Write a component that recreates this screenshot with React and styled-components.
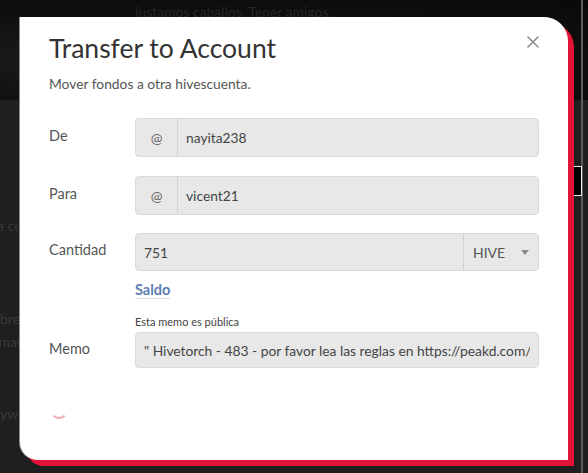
import React from 'react';
import styled, {createGlobalStyle} from 'styled-components';

const GlobalStyle = createGlobalStyle`
  html, body {
    margin: 0;
    padding: 0;
    background: #1f1f1f;
  }
  * { box-sizing: border-box; }
`;

const Page = styled.div`
  width: 588px;
  height: 473px;
  position: relative;
  overflow: hidden;
  background: #1f1f1f;
  font-family: Lato, 'Open Sans', sans-serif;
`;

const Hero = styled.div`
  height: 100px;
  background: radial-gradient(ellipse at 20% 60%, #1c1c1c 0%, #0f0f0f 55%, #0a0a0a 100%);
  padding: 1px 0 0 135px;
  .caption{
    font-size: 13.5px;
    color: #282828;
    letter-spacing: 0.2px;
  }
`;

const BgColumn = styled.div`
  width: 22px;
  overflow: hidden;
  display: flex;
  flex-direction: column;
  font-size: 14px;
  color: #3a3a3a;
  white-space: nowrap;
  line-height: 22px;
`;

const BgLine = styled.div`
  margin-top: ${p => p.$gap}px;
  direction: rtl;
  text-align: left;
`;

const ScrollTrack = styled.div`
  position: absolute;
  top: 0;
  right: 5px;
  width: 2px;
  height: 100%;
  background: #5c5c5c;
`;

const ScrollThumb = styled.div`
  position: absolute;
  top: 166px;
  right: 6px;
  width: 10px;
  height: 30px;
  background: #000;
  border: 1px solid #f0f0f0;
`;

const Modal = styled.div`
  position: absolute;
  left: 20px;
  top: 17px;
  width: 548px;
  height: 443px;
  background: #fff;
  border-radius: 0 24px 0 18px;
  box-shadow: 6px 6px 0 #e31337, -1px 0 0 #8a8a8a;
  padding: 15px 29px 0 29px;
  display: flex;
  flex-direction: column;
`;

const Header = styled.div`
  display: flex;
  justify-content: space-between;
  align-items: flex-start;
`;

const Title = styled.h2`
  margin: 0;
  font-size: 26.5px;
  line-height: 32px;
  font-weight: 400;
  color: #333;
`;

const Close = styled.button`
  background: transparent;
  border: none;
  padding: 0;
  margin: 1px -3px 0 0;
  width: 18px;
  height: 18px;
  display: flex;
  align-items: center;
  justify-content: center;
  cursor: pointer;
`;

const Subtitle = styled.p`
  margin: 11px 0 0 0;
  font-size: 13.8px;
  color: #555;
`;

const Form = styled.div`
  margin-top: 26px;
  display: flex;
  flex-direction: column;
`;

const Row = styled.div`
  display: flex;
  align-items: ${p => p.$top ? 'flex-start' : 'center'};
  margin-top: ${p => p.$gap || 0}px;
`;

const Label = styled.div`
  width: 86px;
  flex-shrink: 0;
  font-size: 14.5px;
  color: #555;
  padding-bottom: ${p => p.$lift ?? 4}px;
`;

const Field = styled.div`
  flex: 1;
  display: flex;
  flex-direction: column;
`;

const Group = styled.div`
  display: flex;
  height: ${p => p.$h || 39}px;
  background: #e8e8e8;
  border: 1px solid #dadada;
  border-radius: 4px;
  overflow: hidden;
`;

const Addon = styled.div`
  width: 42px;
  flex-shrink: 0;
  display: flex;
  align-items: center;
  justify-content: center;
  border-right: 1px solid #d2d2d2;
  font-size: 14px;
  color: #666;
`;

const Input = styled.input`
  flex: 1;
  min-width: 0;
  border: none;
  background: transparent;
  outline: none;
  padding: 0 ${p => p.$pad || 8}px;
  font-family: Lato, 'Open Sans', sans-serif;
  font-size: 13.8px;
  color: #444;
`;

const Select = styled.div`
  width: 75px;
  flex-shrink: 0;
  display: flex;
  align-items: center;
  justify-content: space-between;
  padding: 0 9px 0 9px;
  border-left: 1px solid #d2d2d2;
  font-size: 14px;
  color: #555;
`;

const Caret = styled.span`
  width: 0;
  height: 0;
  border-left: 4px solid transparent;
  border-right: 4px solid transparent;
  border-top: 5px solid #8a8a8a;
`;

const Saldo = styled.a`
  margin-top: 10px;
  align-self: flex-start;
  font-size: 14.5px;
  font-weight: 700;
  color: #5b7fb3;
  text-decoration: none;
  border-bottom: 1px solid #d5dde9;
  line-height: 17px;
`;

const Note = styled.div`
  font-size: 11px;
  color: #444;
  margin-bottom: 4px;
`;

const Spinner = styled.div`
  margin: 33px 0 0 1px;
  width: 18px;
  height: 18px;
  border-radius: 50%;
  border: 2px solid transparent;
  border-bottom-color: #f4a7b7;
`;

export default function App() {
  return (
    <Page>
      <GlobalStyle />
      <Hero>
        <span className="caption">justamos caballos, Tener amigos.</span>
      </Hero>
      <BgColumn>
        <BgLine $gap={115}>a cu</BgLine>
        <BgLine $gap={71}>bre</BgLine>
        <BgLine $gap={1}>mat</BgLine>
        <BgLine $gap={50}>yw</BgLine>
      </BgColumn>
      <ScrollTrack />
      <ScrollThumb />

      <Modal>
        <Header>
          <Title>Transfer to Account</Title>
          <Close aria-label="Cerrar">
            <svg width="12" height="12" viewBox="0 0 12 12">
              <path d="M1 1 L11 11 M11 1 L1 11" stroke="#8c8c8c" strokeWidth="1.6" strokeLinecap="round" />
            </svg>
          </Close>
        </Header>
        <Subtitle>Mover fondos a otra hivescuenta.</Subtitle>

        <Form>
          <Row>
            <Label>De</Label>
            <Field>
              <Group>
                <Addon>@</Addon>
                <Input readOnly value="nayita238" />
              </Group>
            </Field>
          </Row>

          <Row $gap={19}>
            <Label>Para</Label>
            <Field>
              <Group>
                <Addon>@</Addon>
                <Input readOnly value="vicent21" />
              </Group>
            </Field>
          </Row>

          <Row $gap={18} $top>
            <Label $lift={0} style={{paddingTop: 8}}>Cantidad</Label>
            <Field>
              <Group $h={38}>
                <Input readOnly value="751" />
                <Select>HIVE<Caret /></Select>
              </Group>
              <Saldo href="#">Saldo</Saldo>
            </Field>
          </Row>

          <Row $gap={16}>
            <Label $lift={0} style={{paddingTop: 14}}>Memo</Label>
            <Field>
              <Note>Esta memo es pública</Note>
              <Group $h={36}>
                <Input readOnly value={'" Hivetorch - 483 - por favor lea las reglas en https://peakd.com/hivetorch'} />
              </Group>
            </Field>
          </Row>
        </Form>

        <Spinner />
      </Modal>
    </Page>
  );
}
